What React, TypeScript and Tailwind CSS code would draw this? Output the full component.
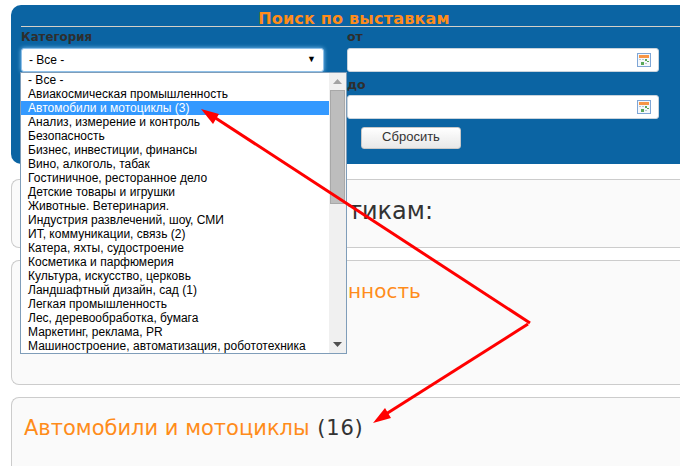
import React from 'react';

const categories = [
  '- Все -',
  'Авиакосмическая промышленность',
  'Автомобили и мотоциклы (3)',
  'Анализ, измерение и контроль',
  'Безопасность',
  'Бизнес, инвестиции, финансы',
  'Вино, алкоголь, табак',
  'Гостиничное, ресторанное дело',
  'Детские товары и игрушки',
  'Животные. Ветеринария.',
  'Индустрия развлечений, шоу, СМИ',
  'ИТ, коммуникации, связь (2)',
  'Катера, яхты, судостроение',
  'Косметика и парфюмерия',
  'Культура, искусство, церковь',
  'Ландшафтный дизайн, сад (1)',
  'Легкая промышленность',
  'Лес, деревообработка, бумага',
  'Маркетинг, реклама, PR',
  'Машиностроение, автоматизация, робототехника',
];

const CalendarIcon = () => (
  <svg width="14" height="14" viewBox="0 0 14 14" className="shrink-0">
    <rect x="0.5" y="0.5" width="13" height="13" fill="#f4f8fc" stroke="#7fa6d6" />
    <rect x="2" y="2" width="10" height="3" fill="#f79646" />
    <rect x="2" y="6" width="2" height="1" fill="#b8c4d0" />
    <rect x="5" y="6" width="2" height="1" fill="#b8c4d0" />
    <rect x="8" y="6" width="2" height="2" fill="#5aa85a" />
    <rect x="10" y="8" width="2" height="1" fill="#5aa85a" />
    <rect x="4" y="9" width="3" height="3" fill="#5aa85a" />
    <rect x="8" y="10" width="2" height="1" fill="#b8c4d0" />
  </svg>
);

const DateField = () => (
  <div className="h-[24px] w-[312px] bg-white rounded-[3px] border border-[#c9d3dc] flex items-center justify-end pr-[7px]">
    <CalendarIcon />
  </div>
);

const App = () => {
  return (
    <div className="relative w-[680px] h-[466px] overflow-hidden bg-white font-['Liberation_Sans',sans-serif]">
      {/* Search panel */}
      <div className="ml-[11px] mt-[5px] h-[159px] bg-[#0b64a3] rounded-tl-[10px] rounded-bl-[10px] pl-[10px] pt-[3px]">
        <div className="h-[19px] border-b border-[#d5d0c8] pl-[7px] text-center font-['DejaVu_Sans',sans-serif] font-bold text-[16px] tracking-[0.2px] leading-[21px] text-[#ff8c1a]">
          Поиск по выставкам
        </div>
        <div className="flex">
          <div className="w-[326px]">
            <div className="h-[21px] font-['DejaVu_Sans',sans-serif] font-bold text-[11.8px] leading-[20px] text-[#2e2e2e]">Категория</div>
            <div className="h-[24px] w-[303px] bg-white rounded-[3px] border border-[#8fc0e8] shadow-[0_0_4px_#7cc0f0] flex items-center justify-between pl-[7px] pr-[7px] text-[12px] text-black">
              <span>- Все -</span>
              <span className="text-[9px]">▼</span>
            </div>
          </div>
          <div>
            <div className="h-[21px] font-['DejaVu_Sans',sans-serif] font-bold text-[12.5px] leading-[20px] text-[#2e2e2e]">от</div>
            <DateField />
            <div className="h-[23px] pt-[3px] font-['DejaVu_Sans',sans-serif] font-bold text-[12.5px] leading-[20px] text-[#2e2e2e]">до</div>
            <DateField />
            <button className="mt-[8px] ml-[14px] block w-[100px] h-[22px] rounded-[3px] border border-[#c8c8c8] bg-gradient-to-b from-white to-[#e8e8e8] text-[13px] leading-[18px] pb-[3px] text-[#333333]">
              Сбросить
            </button>
          </div>
        </div>
      </div>

      {/* Cards, the list covers the start of the first two titles */}
      <div className="ml-[11px] mt-[15px] h-[69px] rounded-l-[8px] border border-r-0 border-[#cccccc] bg-[#fafafa] pl-[336px] pt-[16px] font-['DejaVu_Sans',sans-serif] text-[24px] leading-[30px] text-[#333333] whitespace-nowrap">
        тикам:
      </div>
      <div className="ml-[11px] mt-[12px] h-[125px] rounded-l-[8px] border border-r-0 border-[#cccccc] bg-[#fafafa] pl-[336px] pt-[15px] font-['DejaVu_Sans',sans-serif] text-[20px] leading-[30px] text-[#ff8c1a] whitespace-nowrap">
        нность
      </div>
      <div className="ml-[11px] mt-[12px] h-[80px] rounded-tl-[8px] border border-r-0 border-b-0 border-[#cccccc] bg-[#fafafa] pl-[12px] pt-[15px] font-['DejaVu_Sans',sans-serif] text-[21px] leading-[30px] whitespace-nowrap text-[#333333]">
        <span className="text-[#ff8c1a]">Автомобили и мотоциклы</span> <span className="ml-[1px] tracking-[0.8px]">(16)</span>
      </div>

      {/* Open select list */}
      <div className="absolute left-[20px] top-[72px] w-[327px] h-[282px] border border-[#7f9db9] bg-white flex">
        <div className="flex-1 text-[12px] leading-[14px] text-black tracking-[0.02px]">
          {categories.map((c, i) => (
            <div key={c} className={i === 2 ? 'h-[14px] pl-[7px] bg-[#3399ff] text-white' : 'h-[14px] pl-[7px]'}>
              {c}
            </div>
          ))}
        </div>
        <div className="w-[17px] bg-[#f0f0f0] flex flex-col items-center">
          <div className="h-[17px] flex items-center justify-center">
            <svg width="9" height="5" viewBox="0 0 9 5"><polygon points="4.5,0 9,5 0,5" fill="#a3a3a3" /></svg>
          </div>
          <div className="w-[15px] h-[114px] bg-[#bdbdbd] border border-[#a8a8a8]" />
          <div className="flex-1" />
          <div className="h-[17px] flex items-center justify-center">
            <svg width="9" height="5" viewBox="0 0 9 5"><polygon points="0,0 9,0 4.5,5" fill="#505050" /></svg>
          </div>
        </div>
      </div>

      {/* Annotation arrows */}
      <svg className="absolute left-0 top-0" width="680" height="466" viewBox="0 0 680 466">
        <line x1="530" y1="323" x2="214" y2="117" stroke="#ff0000" strokeWidth="3" />
        <polygon points="201,109 219,114 213,124" fill="#ff0000" />
        <line x1="528" y1="324" x2="386" y2="414" stroke="#ff0000" strokeWidth="3" />
        <polygon points="373,423 385,408 391,418" fill="#ff0000" />
      </svg>
    </div>
  );
};

export default App;
